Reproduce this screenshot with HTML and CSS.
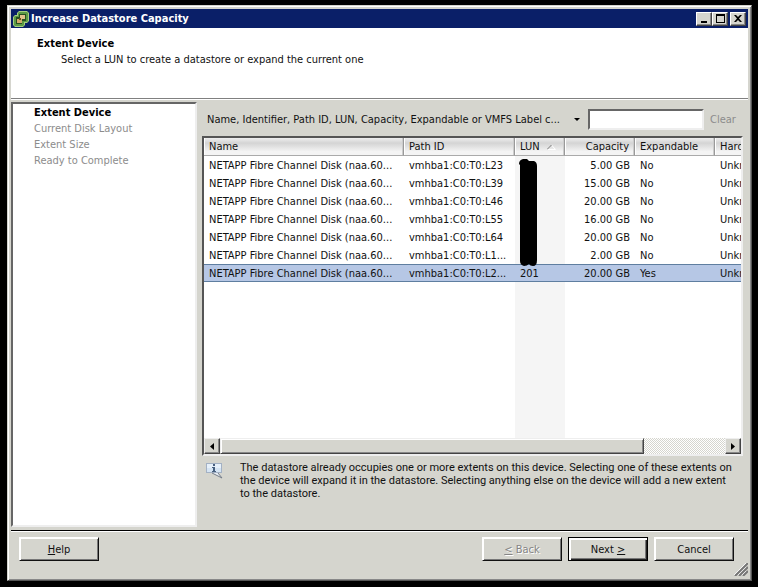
FILE: index.html
```html
<!DOCTYPE html>
<html lang="en">
<head>
<meta charset="utf-8">
<title>Increase Datastore Capacity</title>
<link rel="stylesheet" href="styles.css">
</head>
<body>
<main class="window">
  <header class="titlebar">
    <svg class="app-icon" width="16" height="16" viewBox="0 0 16 16" aria-hidden="true">
      <path d="M6 0h8l2 2v8l-2 2h-2v2l-2 2H2l-2-2V6l2-2h2V2z" fill="#a5cf7e"/>
      <path d="M6 1h8l1 1v8l-1 1h-3v3l-1 1H2l-1-1V6l1-1h3V2z" fill="#5c9a45"/>
      <path d="M6 3h7v7H9v3H3V6h3z" fill="#274f20"/>
      <path d="M7 4h5v4H7z" fill="#e2c28a"/>
      <path d="M4 8h5v4H4z" fill="#d2ac6c"/>
      <path d="M6 7h2v2H6z" fill="#6e4f20"/>
    </svg>
    <h1 class="title">Increase Datastore Capacity</h1>
    <div class="caption-buttons">
      <button class="caption" type="button" aria-label="Minimize"><svg width="12" height="10" viewBox="0 0 12 10"><path d="M3 7h6v2H3z"/></svg></button>
      <button class="caption" type="button" aria-label="Maximize"><svg width="12" height="10" viewBox="0 0 12 10"><path fill-rule="evenodd" d="M2 0h9v9H2zM3 2v6h7V2z"/></svg></button>
      <button class="caption close" type="button" aria-label="Close"><svg width="12" height="10" viewBox="0 0 12 10"><path d="M2 1h2l2 2 2-2h2L7 4.500 10 8H8L6 6 4 8H2l3-3.500z"/></svg></button>
    </div>
  </header>

  <section class="intro">
    <h2 class="intro-title">Extent Device</h2>
    <p class="intro-text">Select a LUN to create a datastore or expand the current one</p>
  </section>

  <div class="content">
    <nav class="steps" aria-label="Wizard steps">
      <a class="step current" href="#device" aria-current="step">Extent Device</a>
      <a class="step" href="#layout">Current Disk Layout</a>
      <a class="step" href="#size">Extent Size</a>
      <a class="step" href="#complete">Ready to Complete</a>
    </nav>

    <section class="device" id="device">
      <div class="filter">
        <label class="filter-field">
          <select class="filter-select" aria-label="Filter fields">
            <option>Name, Identifier, Path ID, LUN, Capacity, Expandable or VMFS Label c...</option>
          </select>
          <svg class="filter-arrow" width="6" height="3" viewBox="0 0 6 3" aria-hidden="true"><path d="M0 0h6L3 3z"/></svg>
        </label>
        <input class="filter-input" type="text" aria-label="Filter text">
        <button class="clear" type="button" disabled>Clear</button>
      </div>

      <div class="list">
        <div class="viewport">
          <table class="devices">
            <colgroup>
              <col class="col-name"><col class="col-path"><col class="col-lun"><col class="col-capacity"><col class="col-expandable"><col class="col-hardware">
            </colgroup>
            <thead>
              <tr>
                <th>Name</th>
                <th>Path ID</th>
                <th>LUN <svg class="sort" width="9" height="6" viewBox="0 0 9 6" aria-hidden="true"><path d="M4.500 1L8.500 5.500H0" stroke="#fff" fill="none"/><path d="M0 5.500L4.500 1" stroke="#777" fill="none"/></svg></th>
                <th class="num">Capacity</th>
                <th>Expandable</th>
                <th>Hard</th>
              </tr>
            </thead>
            <tbody>
              <tr><td>NETAPP Fibre Channel Disk (naa.60...</td><td>vmhba1:C0:T0:L23</td><td class="sorted"><svg class="redaction" width="19" height="108" viewBox="0 0 19 108" aria-hidden="true"><path d="M0 5Q0 1 4 0h4l2 2h5q3 1 3 5v94q0 6-4 6-3 0-4-2-2 2-5 2-4-1-4-5V6z"/></svg></td><td class="num">5.00 GB</td><td>No</td><td>Unkn</td></tr>
              <tr><td>NETAPP Fibre Channel Disk (naa.60...</td><td>vmhba1:C0:T0:L39</td><td class="sorted"></td><td class="num">15.00 GB</td><td>No</td><td>Unkn</td></tr>
              <tr><td>NETAPP Fibre Channel Disk (naa.60...</td><td>vmhba1:C0:T0:L46</td><td class="sorted"></td><td class="num">20.00 GB</td><td>No</td><td>Unkn</td></tr>
              <tr><td>NETAPP Fibre Channel Disk (naa.60...</td><td>vmhba1:C0:T0:L55</td><td class="sorted"></td><td class="num">16.00 GB</td><td>No</td><td>Unkn</td></tr>
              <tr><td>NETAPP Fibre Channel Disk (naa.60...</td><td>vmhba1:C0:T0:L64</td><td class="sorted"></td><td class="num">20.00 GB</td><td>No</td><td>Unkn</td></tr>
              <tr><td>NETAPP Fibre Channel Disk (naa.60...</td><td>vmhba1:C0:T0:L1...</td><td class="sorted"></td><td class="num">2.00 GB</td><td>No</td><td>Unkn</td></tr>
              <tr class="selected"><td>NETAPP Fibre Channel Disk (naa.60...</td><td>vmhba1:C0:T0:L2...</td><td class="sorted">201</td><td class="num">20.00 GB</td><td>Yes</td><td>Unkn</td></tr>
              <tr class="filler"><td></td><td></td><td class="sorted"></td><td></td><td></td><td></td></tr>
            </tbody>
          </table>
        </div>
        <div class="scrollbar">
          <button class="scroll-button" type="button" aria-label="Scroll left"><svg width="4" height="7" viewBox="0 0 4 7"><path d="M4 0v7L0 3.500z"/></svg></button>
          <div class="track"><div class="thumb"></div></div>
          <button class="scroll-button" type="button" aria-label="Scroll right"><svg width="4" height="7" viewBox="0 0 4 7"><path d="M0 0v7l4-3.500z"/></svg></button>
        </div>
      </div>

      <div class="note">
        <svg class="note-icon" width="18" height="17" viewBox="0 0 18 17" aria-hidden="true">
          <path d="M0 1h16v10H0z" fill="#a3b1c4"/>
          <path d="M1 2h14v8H1z" fill="#d5e4f3"/>
          <path d="M1 2h14v4H1z" fill="#e6f0fa"/>
          <path d="M6 11l10 5-4-5" fill="#e8eef5" stroke="#747c88"/>
          <path d="M7 2h2v2H7zM6 5h3v4h1v1H6V9h1V6H6z" fill="#48607f"/>
        </svg>
        <p class="note-text">The datastore already occupies one or more extents on this device. Selecting one of these extents on the device will expand it in the datastore. Selecting anything else on the device will add a new extent to the datastore.</p>
      </div>
    </section>
  </div>

  <footer class="actions">
    <button class="button" type="button"><u>H</u>elp</button>
    <span class="spacer"></span>
    <button class="button" type="button" disabled><u>&lt;</u> Back</button>
    <button class="button default" type="button">Next <u>&gt;</u></button>
    <button class="button" type="button">Cancel</button>
    <svg class="grip" width="14" height="13" viewBox="0 0 14 13" aria-hidden="true">
      <path d="M0 12L12 0M4 12l8-8M8 12l4-4" stroke="#fff" fill="none"/>
      <path d="M1 13L14 0M5 13l9-9M9 13l5-5" stroke="#777" stroke-width="2" fill="none"/>
    </svg>
  </footer>
</main>
</body>
</html>
```
FILE: styles.css
```css
* { box-sizing: border-box; }

body {
  margin: 0;
  min-height: 100vh;
  padding: 5px 6px 6px 7px;
  display: flex;
  background: #000;
  color: #111;
  font: 11px/13px Tahoma, "DejaVu Sans Condensed", "Noto Sans", sans-serif;
}

h1, h2, p { margin: 0; font-size: inherit; }
button, input, select { font: inherit; color: inherit; }

.window {
  flex: 1;
  min-width: 0;
  display: flex;
  flex-direction: column;
  padding: 2px;
  background: #d5d5ce;
  border: 1px solid;
  border-color: #d5d5ce #555 #555 #d5d5ce;
  box-shadow: inset 1px 1px #fff, inset -1px -1px #888;
}

.titlebar {
  display: flex;
  align-items: center;
  height: 19px;
  margin: 1px 1px 0;
  padding: 0 2px;
  background: #0a1f68;
  color: #fff;
}
.title { flex: 1; margin-left: 2px; font-weight: bold; white-space: nowrap; }
.caption-buttons { display: flex; }
.caption {
  width: 16px;
  height: 14px;
  padding: 0;
  display: flex;
  align-items: center;
  justify-content: center;
  background: #d5d5ce;
  border: 1px solid;
  border-color: #fff #444 #444 #fff;
  box-shadow: inset -1px -1px #888;
}
.caption svg { flex: none; }
.caption.close { margin-left: 2px; }

.intro {
  height: 72px;
  margin: 0 1px;
  padding: 9px 26px;
  background: #fff;
  border-bottom: 1px solid #fff;
  box-shadow: inset 0 -1px #808080;
}
.intro-title { font-weight: bold; color: #000; }
.intro-text { margin-top: 3px; padding-left: 24px; }

.content {
  flex: 1;
  min-width: 0;
  display: flex;
  gap: 5px;
  padding: 2px 6px 3px 1px;
}
.steps {
  flex: 0 0 186px;
  padding: 1px 21px;
  background: #fff;
  border: 2px solid;
  border-color: #666 #eee #eee #666;
}
.step {
  display: block;
  height: 16px;
  line-height: 16px;
  color: #8c8c8c;
  text-decoration: none;
}
.step.current { font-weight: bold; color: #000; }

.device { flex: 1; min-width: 0; display: flex; flex-direction: column; }
.filter { display: flex; align-items: center; height: 34px; padding-right: 1px; }
.filter-field { position: relative; flex: 1; min-width: 0; }
.filter-select {
  width: 100%;
  height: 20px;
  padding: 0 20px 0 5px;
  appearance: none;
  border: 0;
  background: transparent;
}
.filter-arrow { position: absolute; right: 8px; top: 9px; }
.filter-input {
  width: 116px;
  height: 21px;
  background: #fff;
  border: 2px solid;
  border-color: #666 #eee #eee #666;
}
.clear {
  width: 38px;
  height: 20px;
  padding: 0;
  border: 0;
  background: transparent;
  color: #8c8c8c;
}

.list {
  flex: 1;
  display: flex;
  flex-direction: column;
  background: #fff;
  border: 2px solid;
  border-color: #555 #eee #eee #555;
}
.viewport { flex: 1; overflow: hidden; display: flex; }
.devices { width: 610px; flex: none; table-layout: fixed; border-collapse: separate; border-spacing: 0; }
.col-name { width: 200px; }
.col-path { width: 111px; }
.col-lun { width: 50px; }
.col-capacity { width: 70px; }
.col-expandable { width: 80px; }
.devices th {
  height: 18px;
  padding: 0 5px;
  text-align: left;
  font-weight: normal;
  white-space: nowrap;
  background: linear-gradient(#eee, #d4d4d4 30%, #f4f4f4 80%);
  border-right: 1px solid #999;
  border-bottom: 1px solid #aaa;
  box-shadow: inset -1px 0 #ccc, inset 1px 0 #fff;
}
.devices td { position: relative; height: 18px; padding: 0 5px; white-space: nowrap; }
.devices .num { text-align: right; }
.sorted { background: #f5f5f5; }
.sort { margin-left: 4px; }
.selected td {
  background: #b6c7e5;
  border-top: 1px solid #5f7ea0;
  border-bottom: 1px solid #5f7ea0;
}
.devices .filler td { height: auto; }
.redaction { position: absolute; left: 4px; top: 3px; z-index: 1; }

.scrollbar { display: flex; height: 16px; }
.scroll-button {
  width: 16px;
  padding: 0;
  display: flex;
  align-items: center;
  justify-content: center;
  background: #d5d5ce;
  border: 1px solid;
  border-color: #eee #444 #444 #eee;
  box-shadow: inset -1px -1px #888;
}
.track {
  flex: 1;
  display: flex;
  background: repeating-conic-gradient(#fff 0 25%, #d5d5ce 0 50%) 0 0 / 2px 2px;
}
.thumb {
  width: 84%;
  background: #d5d5ce;
  border: 1px solid;
  border-color: #eee #444 #444 #eee;
  box-shadow: inset 1px 1px #fff, inset -1px -1px #888;
}

.note { display: flex; align-items: flex-start; height: 71px; padding: 5px 8px 0 4px; }
.note-icon { flex: none; margin-top: 1px; }
.note-text { margin-left: 16px; font-family: Roboto, "Liberation Sans", sans-serif; }

.actions {
  position: relative;
  display: flex;
  gap: 6px;
  height: 48px;
  margin: 0 1px;
  padding: 6px 14px 0 8px;
  border-top: 1px solid #000;
  box-shadow: inset 0 1px #fff;
}
.spacer { flex: 1; }
.button {
  width: 80px;
  height: 24px;
  padding: 0;
  background: #d5d5ce;
  border: 1px solid;
  border-color: #fff #111 #111 #fff;
  box-shadow: inset 1px 1px #fff, inset -1px -1px #777;
}
.button:disabled { color: #858585; text-shadow: 1px 1px #fff; }
.button.default {
  border-color: #000;
  box-shadow: inset 1px 1px #fff, inset 2px 2px #fff, inset -1px -1px #222, inset -2px -2px #777;
}
.grip { position: absolute; right: 0; bottom: 2px; }
```
